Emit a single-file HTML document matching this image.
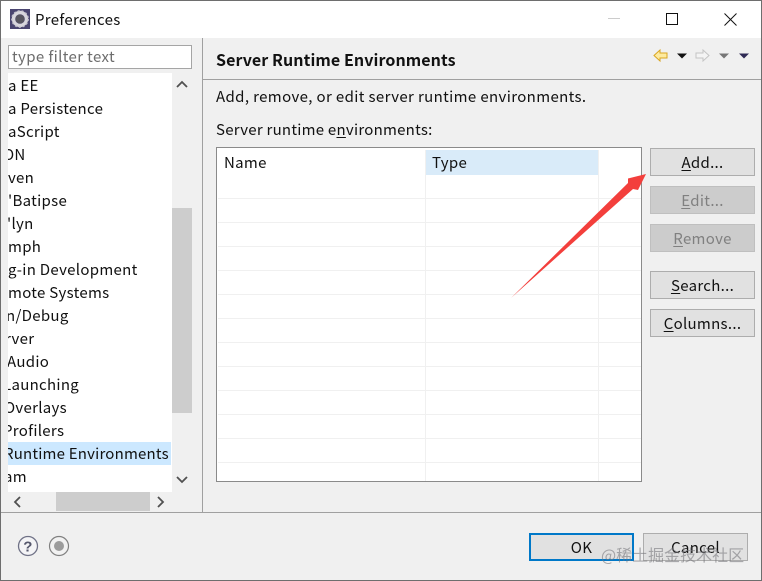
<!DOCTYPE html>
<html><head><meta charset="utf-8"><style>
html,body{margin:0;padding:0}
body{width:762px;height:581px;overflow:hidden;position:relative;background:#f0f0f0;font-family:"Noto Sans CJK SC","Liberation Sans",sans-serif;font-size:15px;color:#111;letter-spacing:.3px}
div,span.a{position:absolute;box-sizing:border-box}
.t{white-space:nowrap;line-height:20px;height:20px}
.tree{left:8px;top:73px;width:164px;height:419px;background:#fff;overflow:hidden}
.tree .t{left:0}
.btn{left:650px;width:105px;height:28px;background:#e1e1e1;border:1px solid #adadad;text-align:center;line-height:28px;color:#111}
.btn.d{background:#ccc;color:#808080;border-color:#bfbfbf}
u{text-underline-offset:2px}
.h{left:218px;width:423px;height:1px;background:#f0f0f0}
</style></head><body>
<div style="left:0;top:0;width:762px;height:38px;background:#fff"></div>
<svg style="position:absolute;left:10px;top:9px" width="20" height="20" viewBox="0 0 20 20"><rect width="20" height="20" fill="#4a4570"/><circle cx="10" cy="10" r="6.5" fill="none" stroke="#d8d6dc" stroke-width="3.4"/><circle cx="10" cy="10" r="8.2" fill="none" stroke="#c2c0cc" stroke-width="1.4" stroke-dasharray="2 2"/><circle cx="10" cy="10" r="4.5" fill="#57555f"/></svg>
<div class="t" style="left:35px;top:10px">Preferences</div>
<div style="left:608px;top:18px;width:12px;height:1px;background:#ccc"></div>
<div style="left:666px;top:13px;width:12px;height:12px;border:1px solid #111"></div>
<svg style="position:absolute;left:724px;top:13px" width="13" height="13"><path d="M.5.5L12.5 12.5M12.5.5L.5 12.5" stroke="#111" fill="none"/></svg>

<div style="left:8px;top:45px;width:184px;height:24px;background:#fff;border:1px solid #a5a5a5"></div>
<div class="t" style="left:12px;top:47px;color:#6d6d6d;letter-spacing:.38px">type filter text</div>

<div class="tree">
<div class="t" style="top:3px">a EE</div>
<div class="t" style="top:26px">a Persistence</div>
<div class="t" style="top:49px">aScript</div>
<div class="t" style="top:72px;left:-5px">ON</div>
<div class="t" style="top:95px">ven</div>
<div class="t" style="top:118px">'Batipse</div>
<div class="t" style="top:141px;left:-1px">'lyn</div>
<div class="t" style="top:164px">mph</div>
<div class="t" style="top:187px">g-in Development</div>
<div class="t" style="top:210px">mote Systems</div>
<div class="t" style="top:233px;left:-2px">n/Debug</div>
<div class="t" style="top:256px;left:-3px">rver</div>
<div class="t" style="top:279px;left:-1px">Audio</div>
<div class="t" style="top:302px;left:-5px">Launching</div>
<div class="t" style="top:325px;left:-4px">Overlays</div>
<div class="t" style="top:348px;left:-5px">Profilers</div>
<div style="left:0;top:369px;width:163px;height:23px;background:#cce8ff"></div>
<div class="t" style="top:371px;left:-4px;letter-spacing:.2px">Runtime Environments</div>
<div class="t" style="top:394px;left:-4px">am</div>
</div>

<div style="left:172px;top:73px;width:20px;height:419px;background:#f0f0f0"></div>
<div style="left:172px;top:208px;width:20px;height:205px;background:#cdcdcd"></div>
<svg style="position:absolute;left:176px;top:80px" width="12" height="9"><path d="M1 7L6 2L11 7" stroke="#505050" stroke-width="1.8" fill="none"/></svg>
<svg style="position:absolute;left:176px;top:475px" width="12" height="9"><path d="M1 2L6 7L11 2" stroke="#505050" stroke-width="1.8" fill="none"/></svg>
<div style="left:56px;top:492px;width:94px;height:19px;background:#cdcdcd"></div>
<svg style="position:absolute;left:13px;top:496px" width="9" height="12"><path d="M7 1L2 6L7 11" stroke="#505050" stroke-width="1.8" fill="none"/></svg>
<svg style="position:absolute;left:156px;top:496px" width="9" height="12"><path d="M2 1L7 6L2 11" stroke="#505050" stroke-width="1.8" fill="none"/></svg>

<div style="left:202px;top:38px;width:1px;height:474px;background:#a0a0a0"></div>
<div style="left:203px;top:79px;width:559px;height:1px;background:#a0a0a0"></div>
<div style="left:1px;top:512px;width:760px;height:1px;background:#a0a0a0"></div>

<div class="t" style="left:216px;top:49px;font-weight:700;font-size:16px;letter-spacing:.08px">Server Runtime Environments</div>
<svg style="position:absolute;left:652px;top:48px" width="100" height="16"><path d="M2 7.500L8 2V5H15V10H8V13Z" fill="#fdeaa0" stroke="#d9a520"/><path d="M44 5H51V2L57 7.500L51 13V10H44Z" fill="#f4f4f4" stroke="#c4c4c4"/><path d="M25 5.500H35L30 10.500Z" fill="#111"/><path d="M67 5.500H77L72 10.500Z" fill="#777"/><path d="M87 5.500H97L92 10.500Z" fill="#2f2a55"/></svg>

<div class="t" style="left:216px;top:87px;letter-spacing:.37px">Add, remove, or edit server runtime environments.</div>
<div class="t" style="left:216px;top:120px;letter-spacing:.25px">Server runtime e<u>n</u>vironments:</div>

<div style="left:216px;top:147px;width:426px;height:335px;background:#fff;border:1px solid #8a8a8a"></div>
<div style="left:425px;top:150px;width:173px;height:25px;background:#d9ebf9"></div>
<div class="h" style="top:198px"></div><div class="h" style="top:222px"></div><div class="h" style="top:246px"></div><div class="h" style="top:270px"></div><div class="h" style="top:294px"></div><div class="h" style="top:318px"></div><div class="h" style="top:342px"></div><div class="h" style="top:366px"></div><div class="h" style="top:390px"></div><div class="h" style="top:414px"></div><div class="h" style="top:438px"></div><div class="h" style="top:462px"></div>
<div style="left:425px;top:150px;width:1px;height:331px;background:#f0f0f0"></div>
<div style="left:598px;top:150px;width:1px;height:331px;background:#f0f0f0"></div>
<div class="t" style="left:224px;top:153px">Name</div>
<div class="t" style="left:432px;top:153px">Type</div>

<div class="btn" style="top:148px"><u>A</u>dd...</div>
<div class="btn d" style="top:186px"><u>E</u>dit...</div>
<div class="btn d" style="top:224px"><u>R</u>emove</div>
<div class="btn" style="top:271px"><u>S</u>earch...</div>
<div class="btn" style="top:309px"><u>C</u>olumns...</div>

<svg style="position:absolute;left:0;top:0" width="762" height="581"><path d="M511 298L628 183L628 178.500L646 174L638 190L633 189Z" fill="#f33f3c"/></svg>

<svg style="position:absolute;left:17px;top:535px" width="22" height="22"><circle cx="11" cy="11" r="9.500" fill="#f4f4f6" stroke="#6f7186" stroke-width="1.300"/><text x="11" y="16.500" text-anchor="middle" font-family="Liberation Sans" font-weight="700" font-size="15" fill="#55576c">?</text></svg>
<svg style="position:absolute;left:48px;top:535px" width="22" height="22"><circle cx="11" cy="11" r="9.500" fill="#f2f2f2" stroke="#808080" stroke-width="1.200"/><circle cx="11" cy="11" r="5" fill="#9c9c9c"/></svg>

<div style="left:529px;top:533px;width:105px;height:28px;background:#e1e1e1;border:2px solid #0078c8;text-align:center;line-height:26px">OK</div>
<div style="left:643px;top:533px;width:105px;height:28px;background:#e1e1e1;border:1px solid #adadad;text-align:center;line-height:28px">Cancel</div>
<div class="t" style="left:601px;top:544px;font-size:16px;letter-spacing:0;color:rgba(120,120,125,.6)">@稀土掘金技术社区</div>

<div style="left:0;top:0;width:762px;height:581px;border:1px solid #6e6e6e"></div>
</body></html>
